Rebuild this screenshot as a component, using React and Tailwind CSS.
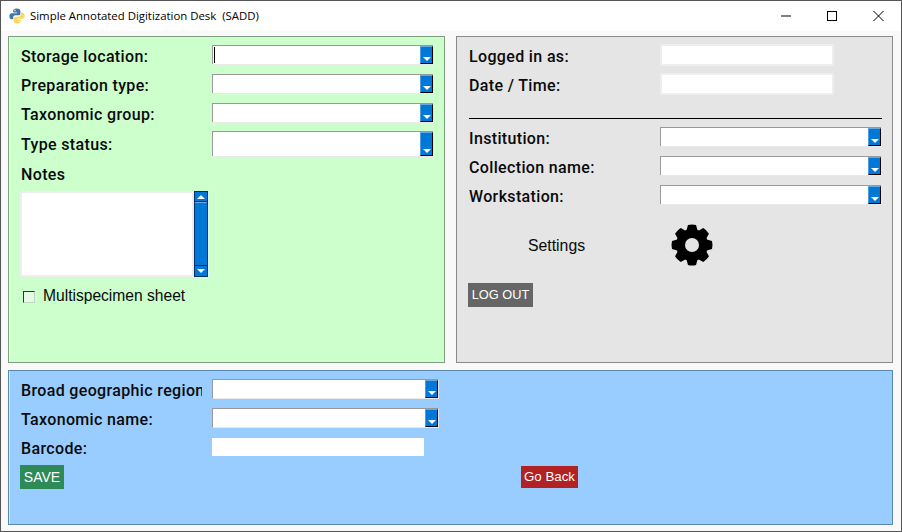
import React from "react";

const labelFont = "font-['Roboto',sans-serif] font-medium text-[16px] leading-[20px] tracking-[0.35px] text-[#0a0a0a] whitespace-nowrap";
const plainFont = "font-['Liberation_Sans',sans-serif]";

function Arrow({ up = false }) {
  return (
    <svg width="8" height="4" viewBox="0 0 8 4" className="block">
      <path d={up ? "M4 0L8 4H0Z" : "M0 0H8L4 4Z"} fill="#fff" />
    </svg>
  );
}

function Combo({ width, height = "h-[19px]", caret = false }) {
  return (
    <div className={`${width} ${height} flex shrink-0 bg-white border-t border-l border-t-[#999] border-l-[#999] shadow-[1px_1px_0_#e9e9e9]`}>
      <div className="flex-1 min-w-0 pl-[1px] pt-[1px] pb-[1px]">
        {caret && <div className="w-px h-full bg-black" />}
      </div>
      <div className="w-[13px] flex flex-col items-center justify-end pb-[2px] bg-[#0078d7] border-r border-b border-r-black border-b-black border-t border-t-[#6aa9e0] border-l border-l-[#4d9be0]">
        <Arrow />
      </div>
    </div>
  );
}

function Row({ label, children, height = "h-[19px]", gap = "mb-[10px]", labelPad = "pt-[4px]" }) {
  return (
    <div className={`flex items-center ${height} ${gap}`}>
      <div className={`w-[191px] shrink-0 ${labelPad} ${labelFont}`}>{label}</div>
      {children}
    </div>
  );
}

function ReadOnly() {
  return <div className="w-[174px] h-[22px] bg-white border-2 border-[#eeeeee]" />;
}

function Gear() {
  const angles = [0, 45, 90, 135, 180, 225, 270, 315];
  return (
    <svg width="44" height="44" viewBox="0 0 44 44" className="block">
      <circle cx="22" cy="22" r="16" fill="#000" />
      {angles.map((a) => (
        <path key={a} d="M18 2Q22 1 26 2L28 9H16Z" fill="#000" transform={`rotate(${a} 22 22)`} />
      ))}
      <circle cx="22" cy="22" r="7" fill="#e5e5e5" />
    </svg>
  );
}

function PythonLogo() {
  return (
    <svg width="16" height="16" viewBox="0 0 16 16" className="block">
      <path d="M7.8 0.5C5 0.5 4.2 1.4 4.2 3V4.5H8V5.2H2.8C1.2 5.2 0.4 6.4 0.4 8.2S1.2 11.3 2.8 11.3H4.2V9.4C4.2 8 5.2 7.2 6.4 7.2H9.6C10.8 7.2 11.4 6.4 11.4 5.4V3C11.4 1.4 10 0.5 7.8 0.5Z" fill="#3f78a8" />
      <circle cx="6" cy="2.5" r="0.7" fill="#fff" />
      <path d="M8.2 15.5C11 15.5 11.8 14.6 11.8 13V11.5H8V10.8H13.2C14.8 10.8 15.6 9.6 15.6 7.8S14.8 4.7 13.2 4.7H11.8V6.6C11.8 8 10.8 8.8 9.6 8.8H6.4C5.2 8.8 4.6 9.6 4.6 10.6V13C4.6 14.6 6 15.5 8.2 15.5Z" fill="#fdd85c" />
      <circle cx="10" cy="13.5" r="0.7" fill="#fff" />
    </svg>
  );
}

export default function App() {
  return (
    <div className="w-[902px] h-[532px] flex flex-col bg-[#f9f9f9] border border-[#555] overflow-hidden">
      <div className="h-[30px] shrink-0 bg-white flex items-center">
        <div className="ml-[8px] mr-[5px]"><PythonLogo /></div>
        <div className="font-['Open_Sans',sans-serif] text-[11.4px] text-black whitespace-pre">Simple Annotated Digitization Desk  (SADD)</div>
        <div className="ml-auto flex items-center">
          <svg width="46" height="30" viewBox="0 0 46 30"><path d="M0 15H10" stroke="#000" transform="translate(18 0)" /></svg>
          <svg width="46" height="30" viewBox="0 0 46 30"><rect x="18.5" y="10.5" width="9" height="9" fill="none" stroke="#000" /></svg>
          <svg width="46" height="30" viewBox="0 0 46 30"><path d="M18.5 10L28.5 20M28.5 10L18.5 20" stroke="#000" /></svg>
        </div>
      </div>

      <div className="flex-1 pl-[7px] pr-[8px] pt-[5px] pb-[6px] flex flex-col gap-[7px]">
        <div className="flex gap-[11px] h-[327px]">
          <div className="w-[437px] bg-[#ccffcc] border border-[#7f9f7f] pl-[12px] pt-[8px] shadow-[inset_1px_0_0_#e8ffe8]">
            <Row label="Storage location:"><Combo width="w-[221px]" caret /></Row>
            <Row label="Preparation type:"><Combo width="w-[221px]" /></Row>
            <Row label="Taxonomic group:" gap="mb-[9px]"><Combo width="w-[221px]" /></Row>
            <Row label="Type status:" height="h-[25px]" gap="mb-[9px]" labelPad="pt-[2px]"><Combo width="w-[221px]" height="h-[25px]" /></Row>
            <div className={`${labelFont} h-[20px] flex items-center mb-[6px]`}>Notes</div>
            <div className="flex h-[86px] -ml-[1px]">
              <div className="w-[174px] bg-white border-2 border-[#eeeeee]" />
              <div className="w-[14px] flex flex-col bg-[#0078d7] border border-[#0a2f66] shadow-[1px_0_0_#dff5ff]">
                <div className="h-[10px] flex items-center justify-center border-b border-[#0a2f66]"><Arrow up /></div>
                <div className="flex-1 border-t border-[#6aa9e0]" />
                <div className="h-[11px] flex items-center justify-center border-t border-[#0a2f66]"><Arrow /></div>
              </div>
            </div>
            <div className="flex items-center mt-[11px] ml-[2px] h-[18px]">
              <div className="w-[12px] h-[12px] bg-[#e6f9e6] border border-[#bcd9bc] border-t-[#333] border-l-[#333]" />
              <div className={`${plainFont} ml-[8px] pb-[2px] text-[15.6px] text-[#0a0a0a] whitespace-nowrap`}>Multispecimen sheet</div>
            </div>
          </div>

          <div className="w-[437px] bg-[#e5e5e5] border border-[#8a8a8a] pl-[12px] pt-[7px]">
            <Row label="Logged in as:" height="h-[22px]" gap="mb-[7px]"><ReadOnly /></Row>
            <Row label="Date / Time:" height="h-[22px]" gap="mb-[0px]"><ReadOnly /></Row>
            <div className="w-[413px] h-px bg-black mt-[23px] mb-[8px]" />
            <Row label="Institution:"><Combo width="w-[221px]" /></Row>
            <Row label="Collection name:"><Combo width="w-[221px]" /></Row>
            <Row label="Workstation:"><Combo width="w-[221px]" /></Row>
            <div className="flex items-center h-[44px] mt-[19px]">
              <div className={`${plainFont} w-[201px] pl-[59px] pt-[2px] text-[15.8px] text-[#0a0a0a]`}>Settings</div>
              <Gear />
            </div>
            <div className={`${plainFont} mt-[16px] -ml-[1px] w-[65px] h-[24px] flex items-center justify-center bg-[#666666] text-white text-[12.8px]`}>LOG OUT</div>
          </div>
        </div>

        <div className="h-[155px] bg-[#99ccff] border border-[#5b87ad] pl-[12px] pt-[8px] shadow-[inset_1px_0_0_#cfe6ff]">
          <div className="flex items-center h-[19px] mb-[10px]">
            <div className={`w-[181px] mr-[10px] shrink-0 overflow-hidden pt-[4px] ${labelFont}`}>Broad geographic region</div>
            <Combo width="w-[226px]" />
          </div>
          <Row label="Taxonomic name:"><Combo width="w-[226px]" /></Row>
          <Row label="Barcode:" gap="mb-[9px]"><div className="w-[212px] h-[18px] bg-white" /></Row>
          <div className="flex items-start -ml-[1px]">
            <div className={`${plainFont} w-[44px] h-[24px] flex items-center justify-center bg-[#2e8b57] text-white text-[14px]`}>SAVE</div>
            <div className={`${plainFont} ml-[457px] mt-[1px] w-[57px] h-[22px] flex items-center justify-center bg-[#b22222] text-white text-[13.3px]`}>Go Back</div>
          </div>
        </div>
      </div>
    </div>
  );
}
